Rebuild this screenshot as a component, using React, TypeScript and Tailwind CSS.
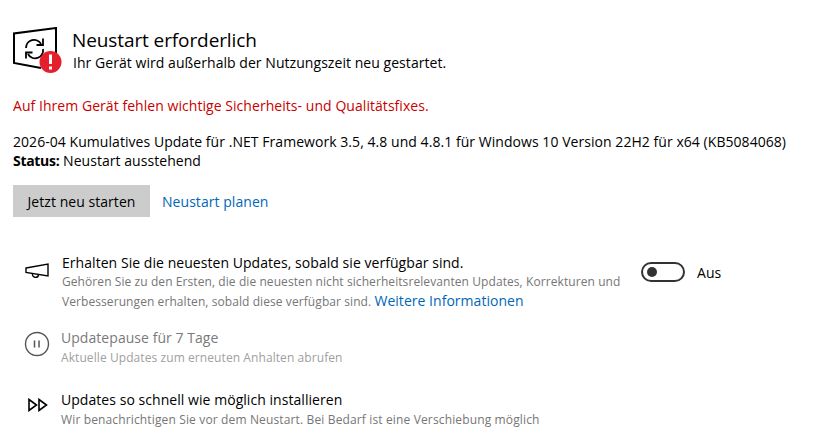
export default function App() {
  const font = { fontFamily: '"Open Sans", sans-serif' };
  return (
    <div className="w-[821px] h-[442px] overflow-hidden bg-white pl-[13px] pt-[27px] text-black" style={font}>
      <div className="flex h-[46px]">
        <svg width="50" height="46" viewBox="0 0 50 46" className="shrink-0" fill="none">
          <path d="M43 26 V1 L1 6.5 V36 L28 41" stroke="#000" strokeWidth="2" />
          <path d="M13 21 a8 8 0 0 1 15 -4 M30 22 a8 8 0 0 1 -15 5" stroke="#000" strokeWidth="1.8" />
          <path d="M30 11.5 V18 H23.5 M13 31.5 V25.5 H19.5" stroke="#000" strokeWidth="1.8" />
          <circle cx="37.5" cy="35" r="11" fill="#e3202c" />
          <rect x="36" y="27.5" width="3" height="9.5" fill="#fff" />
          <rect x="36" y="39.5" width="3" height="3" fill="#fff" />
        </svg>
        <div className="ml-[9px]">
          <div className="text-[19px] leading-[26px] tracking-[-0.1px]">Neustart erforderlich</div>
          <div className="text-[14px] leading-[20px] ml-[1px] tracking-[0.05px]">Ihr Gerät wird außerhalb der Nutzungszeit neu gestartet.</div>
        </div>
      </div>
      <div className="mt-[23px] text-[14px] leading-[20px] text-[#c80000] tracking-[0.05px]">Auf Ihrem Gerät fehlen wichtige Sicherheits- und Qualitätsfixes.</div>
      <div className="mt-[16px] text-[14px] leading-[20px] tracking-[0.05px] whitespace-nowrap">2026-04 Kumulatives Update für .NET Framework 3.5, 4.8 und 4.8.1 für Windows 10 Version 22H2 für x64 (KB5084068)</div>
      <div className="-mt-[1px] text-[14px] leading-[20px] tracking-[0.05px]"><span className="font-bold tracking-[-0.3px]">Status:</span> Neustart ausstehend</div>
      <div className="flex items-center mt-[14px]">
        <button className="w-[137px] h-[32px] bg-[#cccccc] text-[14px] tracking-[0.05px]">Jetzt neu starten</button>
        <span className="ml-[12px] text-[14px] tracking-[0.05px] text-[#0067b8]">Neustart planen</span>
      </div>
      <div className="flex mt-[36px] h-[60px]">
        <svg width="24" height="16" viewBox="0 0 24 16" className="ml-[12px] mt-[10px] shrink-0" fill="none" stroke="#000" strokeWidth="1.4">
          <path d="M1 5 L23 1 V13 L1 9.5 Z" />
          <path d="M7.5 11 a3 2.8 0 0 0 6 1" />
        </svg>
        <div className="ml-[13px] w-[585px]">
          <div className="text-[14px] leading-[20px] tracking-[0.05px]">Erhalten Sie die neuesten Updates, sobald sie verfügbar sind.</div>
          <div className="text-[12px] leading-[19px] -mt-[1px] text-[#767676] tracking-[0.08px]">
            Gehören Sie zu den Ersten, die die neuesten nicht sicherheitsrelevanten Updates, Korrekturen und<br />
            Verbesserungen erhalten, sobald diese verfügbar sind. <span className="text-[14px] text-[#0067b8] tracking-[0.03px]">Weitere Informationen</span>
          </div>
        </div>
        <div className="flex items-center h-[20px] ml-[-6px] mt-[9px]">
          <div className="w-[44px] h-[20px] rounded-full border-2 border-[#333] flex items-center pl-[4px]">
            <div className="w-[10px] h-[10px] rounded-full bg-[#333]" />
          </div>
          <span className="ml-[12px] text-[14px] tracking-[0.05px]">Aus</span>
        </div>
      </div>
      <div className="flex mt-[15px] h-[40px]">
        <svg width="26" height="26" viewBox="0 0 26 26" className="ml-[11px] mt-[3px] shrink-0" fill="none" stroke="#555" strokeWidth="1.4">
          <circle cx="13" cy="13" r="11.5" />
          <path d="M10.5 9.5 V16.5 M15 9.5 V16.5" strokeWidth="1.5" />
        </svg>
        <div className="ml-[11px]">
          <div className="text-[14px] leading-[20px] text-[#7a7a7a] tracking-[0.05px]">Updatepause für 7 Tage</div>
          <div className="text-[12px] leading-[18px] mt-[1px] text-[#a0a0a0] tracking-[0.08px]">Aktuelle Updates zum erneuten Anhalten abrufen</div>
        </div>
      </div>
      <div className="flex mt-[22px] h-[40px]">
        <svg width="22" height="14" viewBox="0 0 22 14" className="ml-[14px] mt-[8px] shrink-0" fill="none" stroke="#000" strokeWidth="1.6">
          <path d="M2 1.5 L9.5 7 L2 12.5 Z M12 1.5 L19.5 7 L12 12.5 Z" />
        </svg>
        <div className="ml-[12px]">
          <div className="text-[14px] leading-[20px] tracking-[0.05px]">Updates so schnell wie möglich installieren</div>
          <div className="text-[12px] leading-[18px] mt-[1px] text-[#767676] tracking-[0.14px]">Wir benachrichtigen Sie vor dem Neustart. Bei Bedarf ist eine Verschiebung möglich</div>
        </div>
      </div>
    </div>
  );
}
